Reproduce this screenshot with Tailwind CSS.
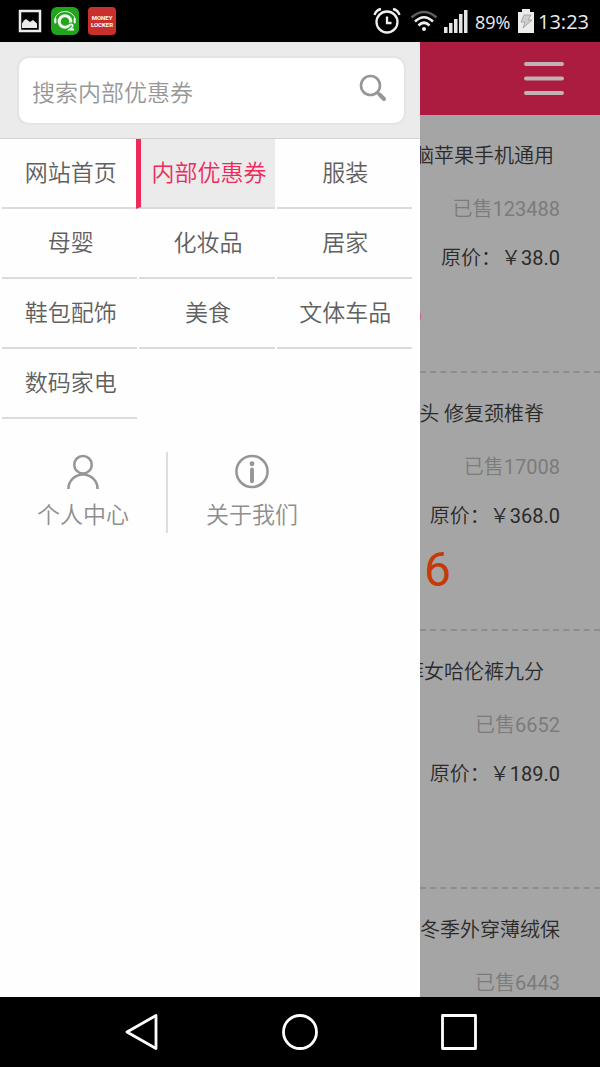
<!DOCTYPE html>
<html lang="zh-CN">
<head>
<meta charset="utf-8">
<meta name="viewport" content="width=device-width, initial-scale=1">
<title>内部优惠券</title>
<script src="https://cdn.jsdelivr.net/npm/@tailwindcss/browser@4"></script>
</head>
<body class="h-screen flex flex-col overflow-hidden bg-black font-['Roboto','Noto_Sans_CJK_SC',sans-serif]">
  <!-- status bar -->
  <div class="h-[42px] shrink-0 flex items-center justify-between pl-[18px] pr-3 text-[#ececec]">
    <div class="flex items-center gap-[9px]">
      <svg class="w-6 h-6" viewBox="0 0 24 24"><rect x="2" y="2" width="20" height="20" fill="none" stroke="#ececec" stroke-width="2.500"/><path d="M4 19V14.500l2-3 2-1.500 2 1.500 2 1.500 3-2 4 3.500V19z" fill="#ececec"/></svg>
      <svg class="w-7 h-7" viewBox="0 0 28 28"><rect width="28" height="28" rx="6" fill="#22a41d"/><path d="M4 13a10 8.500 0 0 1 20 0" fill="none" stroke="#e9f5e8" stroke-width="1"/><path d="M4.300 12v3.500M23.700 12v3.500" stroke="#e9f5e8" stroke-width="2.200" stroke-linecap="round"/><circle cx="14" cy="14.500" r="5.800" fill="none" stroke="#f2f8f2" stroke-width="3"/><path d="M18 18.500q2.500-2 3.500-.5t-3 4.500h4.500" fill="none" stroke="#22a41d" stroke-width="4"/><path d="M18 18.500q2.500-2 3.500-.5t-3 4.500h4.500" fill="none" stroke="#f2f8f2" stroke-width="1.800"/></svg>
      <div class="size-7 rounded-sm bg-[#c9302b] flex flex-col items-center justify-center text-[6px] leading-[7px] font-bold text-white"><span>MONEY</span><span>LOCKER</span></div>
    </div>
    <div class="flex items-center font-['Open_Sans','Noto_Sans_CJK_SC',sans-serif]">
      <svg class="w-7 h-7" viewBox="0 0 28 28" fill="none" stroke="#f0f0f0" stroke-width="2.300"><circle cx="14" cy="15" r="10.500"/><path d="M14 9.500V16h4.500"/><path d="M1.500 8Q3 3 8 2M26.500 8Q25 3 20 2"/></svg>
      <svg class="w-7 h-6 ml-[9px]" viewBox="0 0 28 24" fill="none" stroke-width="2.600"><path d="M1.500 8.500Q14-2.500 26.500 8.500" stroke="#5c5c5c"/><path d="M5 12.500Q14 4 23 12.500M8.500 16.500Q14 11 19.500 16.500" stroke="#f0f0f0"/><circle cx="14" cy="20" r="2" fill="#f0f0f0"/></svg>
      <svg class="w-6 h-6 ml-[6px]" viewBox="0 0 24 24" fill="#e4e4e4"><path d="M0 18h3.500v6H0zM5 14h3.500v10H5zM10 10h3.500v14H10zM15 5h3.500v19H15zM20 1h3.500v23H20z"/></svg>
      <span class="ml-[7px] w-[37px] pt-[2px] text-[18px] leading-6">89%</span>
      <svg class="w-4 h-6 ml-[6px]" viewBox="0 0 16 24"><path d="M4 0h8v3h4v21H0V3h4z" fill="#ececec"/><path d="M6 6h7l-3 5h4L5 19l2-6H3z" fill="#cfcfcf" stroke="#999" stroke-width=".8"/></svg>
      <span class="ml-1 w-[50px] pt-[2px] text-[20px] leading-6">13:23</span>
    </div>
  </div>

  <div class="flex-1 min-h-0 flex">
    <!-- drawer -->
    <aside class="w-[70%] shrink-0 bg-[#fefefe] flex flex-col">
      <form class="bg-[#ebebeb] border-b border-[#d3d3d3] pt-[14px] pb-[13px] pl-[17px] pr-[14px]">
        <div class="h-[69px] flex items-center rounded-xl bg-white border-2 border-[#e4e4e4] pl-[13px] pr-[17px]">
          <input type="search" aria-label="搜索" placeholder="搜索内部优惠券" class="flex-1 min-w-0 h-10 mt-[6px] font-[350] text-[23px] outline-none placeholder:text-[#979797]">
          <button type="submit" aria-label="搜索" class="mb-[6px]"><svg class="w-7 h-7" viewBox="0 0 28 28" fill="none" stroke="#969696"><circle cx="11.500" cy="11.500" r="9.500" stroke-width="2.600"/><path d="M18.500 18.500l1.500 1.500" stroke-width="2.600"/><path d="M20.500 20.500l4.500 4.500" stroke-width="4" stroke-linecap="round"/></svg></button>
        </div>
      </form>
      <nav class="grid grid-cols-3 gap-x-[2px] pl-[2px] pr-2 text-[23px] font-[350] text-[#606060] *:h-[70px] *:pl-[2px] *:pt-[2px] *:flex *:items-center *:justify-center *:border-b-2 *:border-b-[#dbdbdb] *:whitespace-nowrap">
        <a href="#">网站首页</a>
        <a href="#" aria-current="page" class="bg-[#ebebeb] text-[#ee2a5c] border-l-[5px] border-l-[#ee2a5c] -ml-[3px]">内部优惠券</a>
        <a href="#">服装</a>
        <a href="#">母婴</a>
        <a href="#">化妆品</a>
        <a href="#">居家</a>
        <a href="#">鞋包配饰</a>
        <a href="#">美食</a>
        <a href="#">文体车品</a>
        <a href="#">数码家电</a>
      </nav>
      <div class="mt-[33px] pr-[84px] grid grid-cols-2 text-[23px] leading-[34px] font-[350] text-[#8e8e8e]">
        <a href="#" class="h-[81px] flex flex-col items-center border-r-2 border-[#dedede]">
          <svg class="w-9 h-9 mt-[2px] mb-[10px]" viewBox="0 0 36 36" fill="none" stroke="#969696" stroke-width="2.600"><circle cx="18" cy="11" r="9"/><path d="M3 36a15 15 0 0 1 30 0"/></svg>
          个人中心
        </a>
        <a href="#" class="h-[81px] flex flex-col items-center">
          <svg class="w-9 h-9 mt-[2px] mb-[10px]" viewBox="0 0 36 36" fill="none" stroke="#969696"><circle cx="18" cy="18" r="16" stroke-width="2.600"/><circle cx="18" cy="10" r="2.500" fill="#969696" stroke="none"/><path d="M18 16v12" stroke-width="4" stroke-linecap="round"/></svg>
          关于我们
        </a>
      </div>
    </aside>

    <!-- dimmed page behind the drawer -->
    <main class="flex-1 min-w-0 overflow-hidden bg-[#a5a5a5] text-[20px] leading-[30px] font-[350] text-[#2a2a2a]">
      <header class="h-[73px] bg-[#ac1c41] flex items-center justify-end pr-[35px]">
        <button aria-label="菜单"><svg class="w-[42px] h-9" viewBox="0 0 42 36" stroke="#bfb3b5" stroke-width="4" stroke-linecap="round"><path d="M3 3h36M3 17.500h36M3 32h36"/></svg></button>
      </header>
      <article class="h-[258px] pt-[26px] pr-10 flex flex-col items-end whitespace-nowrap border-b-2 border-dashed border-[#8d8d8d]">
        <h2 class="pr-[6px]">脑苹果手机通用</h2>
        <p class="mt-[23px] text-[#7b7b7b]">已售<span class="font-normal">123488</span></p>
        <p class="mt-[19px]">原价：￥<span class="font-normal">38.0</span></p>
        <p class="mt-[9px] pr-[137px] text-[48px] leading-[60px] font-normal text-[#c43b08]">6</p>
      </article>
      <article class="h-[258px] pt-[26px] pr-10 flex flex-col items-end whitespace-nowrap border-b-2 border-dashed border-[#8d8d8d]">
        <h2 class="pr-4">头 修复颈椎脊</h2>
        <p class="mt-[23px] text-[#7b7b7b]">已售<span class="font-normal">17008</span></p>
        <p class="mt-[19px]">原价：￥<span class="font-normal">368.0</span></p>
        <p class="mt-[9px] pr-[109px] text-[48px] leading-[60px] font-normal text-[#c43b08]">6</p>
      </article>
      <article class="h-[258px] pt-[26px] pr-10 flex flex-col items-end whitespace-nowrap border-b-2 border-dashed border-[#8d8d8d]">
        <h2 class="pr-4">菲女哈伦裤九分</h2>
        <p class="mt-[23px] text-[#7b7b7b]">已售<span class="font-normal">6652</span></p>
        <p class="mt-[19px]">原价：￥<span class="font-normal">189.0</span></p>
      </article>
      <article class="h-[258px] pt-[26px] pr-10 flex flex-col items-end whitespace-nowrap">
        <h2>冬季外穿薄绒保</h2>
        <p class="mt-[23px] text-[#7b7b7b]">已售<span class="font-normal">6443</span></p>
      </article>
    </main>
  </div>

  <!-- navigation bar -->
  <div class="h-[70px] shrink-0 grid grid-cols-[1fr_40px_1fr] items-center bg-black">
    <button aria-label="返回" class="justify-self-center"><svg class="w-10 h-10" viewBox="0 0 40 40" fill="none" stroke="#fff" stroke-width="2.800" stroke-linejoin="round"><path d="M36 3.500v33L7 20z"/></svg></button>
    <button aria-label="主页"><svg class="w-10 h-10" viewBox="0 0 40 40" fill="none" stroke="#fff" stroke-width="2.800"><circle cx="20" cy="20" r="16.500"/></svg></button>
    <button aria-label="最近任务" class="justify-self-center"><svg class="w-10 h-10" viewBox="0 0 40 40" fill="none" stroke="#fff" stroke-width="2.800" stroke-linejoin="round"><path d="M2.500 3.500h33v33h-33z"/></svg></button>
  </div>
</body>
</html>
